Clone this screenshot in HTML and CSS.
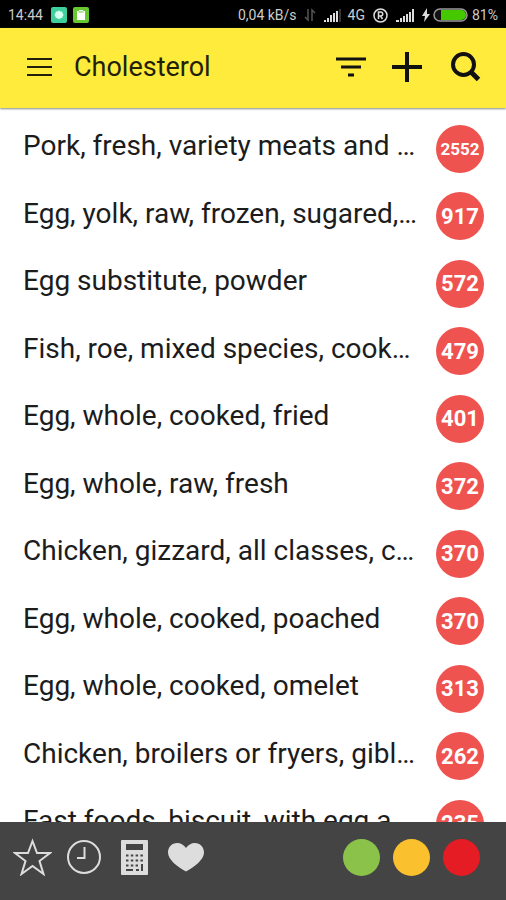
FILE: index.html
```html
<!DOCTYPE html>
<html lang="en">
<head>
<meta charset="utf-8">
<meta name="viewport" content="width=device-width, initial-scale=1">
<title>Cholesterol</title>
<link rel="stylesheet" href="styles.css">
</head>
<body>
<div class="status">
  <span class="clock">14:44</span>
  <svg class="app" width="16" height="16" viewBox="0 0 16 16"><rect width="16" height="16" rx="2" fill="#3fcf9c"/><path d="M8 3.500l1.400 1 1.700.1.500 1.700 1 1.600-1 1.500-.5 1.700-1.700.2-1.400 1-1.400-1-1.700-.2-.5-1.700-1-1.500 1-1.600.5-1.700 1.700-.1z" fill="#d5fff0"/></svg>
  <svg class="app" width="16" height="16" viewBox="0 0 16 16"><rect width="16" height="16" rx="2" fill="#68c832"/><path d="M4 4h2V3h4v1h2v9H4z" fill="#fff"/><path d="M5.500 5h5" stroke="#68c832"/></svg>
  <span class="speed">0,04 kB/s</span>
  <svg class="data" width="12" height="14" viewBox="0 0 12 14" fill="none" stroke="#555" stroke-width="1.500"><path d="M4 1v11L1 9M8 13V2l3 3"/></svg>
  <svg class="signal-a" width="17" height="13" viewBox="0 0 17 13"><path d="M0 13v-2h2v2zM3 13V9h2v4zM6 13V6h2v7zM9 13V4h2v9zM12 13V2h2v11z" fill="#ddd"/><path d="M15 13V0h2v13z" fill="#333"/></svg>
  <span class="net">4G</span>
  <svg class="roaming" width="15" height="15" viewBox="0 0 15 15" fill="none" stroke="#ddd" stroke-width="1.500"><circle cx="7.500" cy="7.500" r="6.500"/><path d="M5.500 11V4h2.200a1.800 1.800 0 0 1 0 4H5.500M7.500 8l2 3"/></svg>
  <svg class="signal-b" width="19" height="13" viewBox="0 0 19 13"><path d="M0 13v-2h3v2zM4 13V9h2v4zM7 13V7h2v6zM10 13V5h2v8zM13 13V3h2v10zM16 13V0h2v13z" fill="#ddd"/></svg>
  <svg class="bolt" width="8" height="14" viewBox="0 0 8 14"><path d="M5 0L0 8h3l-1 6 6-8H5z" fill="#ddd"/></svg>
  <svg class="battery" width="35" height="14" viewBox="0 0 35 14"><rect x="1" y="1" width="33" height="12" rx="6" fill="#111" stroke="#999" stroke-width="1.500"/><path d="M8 2h20a5 5 0 0 1 0 10H8z" fill="#46c800"/></svg>
  <span class="percent">81%</span>
</div>
<header class="bar">
  <button class="icon" aria-label="Menu"><svg width="26" height="20" viewBox="0 0 26 20"><path d="M0 2h25M0 10h25M0 18h25" stroke="#221f08" stroke-width="2"/></svg></button>
  <h1>Cholesterol</h1>
  <button class="icon filter" aria-label="Filter"><svg width="30" height="20" viewBox="0 0 30 20"><path d="M0 2h30M5 10h20M12 18h6" stroke="#111" stroke-width="3"/></svg></button>
  <button class="icon add" aria-label="Add"><svg width="30" height="30" viewBox="0 0 30 30"><path d="M15 0v30M0 15h30" stroke="#111" stroke-width="4"/></svg></button>
  <button class="icon" aria-label="Search"><svg width="30" height="30" viewBox="0 0 30 30" fill="none" stroke="#111"><circle cx="12.500" cy="12.500" r="10.500" stroke-width="4"/><path d="M19 19l8.500 8.500" stroke-width="5"/></svg></button>
</header>
<main class="content">
  <ul class="foods">
    <li><span class="name">Pork, fresh, variety meats and …</span><span class="badge long">2552</span></li>
    <li><span class="name">Egg, yolk, raw, frozen, sugared,…</span><span class="badge">917</span></li>
    <li><span class="name">Egg substitute, powder</span><span class="badge">572</span></li>
    <li><span class="name">Fish, roe, mixed species, cook…</span><span class="badge">479</span></li>
    <li><span class="name">Egg, whole, cooked, fried</span><span class="badge">401</span></li>
    <li><span class="name">Egg, whole, raw, fresh</span><span class="badge">372</span></li>
    <li><span class="name">Chicken, gizzard, all classes, c…</span><span class="badge">370</span></li>
    <li><span class="name">Egg, whole, cooked, poached</span><span class="badge">370</span></li>
    <li><span class="name">Egg, whole, cooked, omelet</span><span class="badge">313</span></li>
    <li><span class="name">Chicken, broilers or fryers, gibl…</span><span class="badge">262</span></li>
    <li><span class="name">Fast foods, biscuit, with egg a…</span><span class="badge">235</span></li>
  </ul>
</main>
<footer class="tools">
  <button class="icon" aria-label="Favourites"><svg width="39" height="38" viewBox="0 0 39 38"><path d="M19.500 3L24 15h13L26.500 23l4 13-11-8-11 8 4-13L2 15h13z" fill="none" stroke="#ddd" stroke-width="2"/></svg></button>
  <button class="icon" aria-label="History"><svg width="34" height="34" viewBox="0 0 34 34" fill="none" stroke="#ddd" stroke-width="2"><circle cx="17" cy="17" r="16"/><path d="M17.500 7v11H10"/></svg></button>
  <button class="icon calc" aria-label="Calculator"><svg width="27" height="35" viewBox="0 0 27 35"><rect width="27" height="35" rx="1" fill="#ddd"/><path d="M5 4h17v6H5z" fill="#444"/><path d="M5 15.500h17M5 20.500h17M5 25.500h12" stroke="#444" stroke-width="2" stroke-dasharray="2.500 2.300"/><path d="M5 30h7M15 30h3M21 24v7" stroke="#444" stroke-width="2"/></svg></button>
  <button class="icon" aria-label="Health"><svg width="36" height="29" viewBox="0 0 36 29"><path d="M18 28.500C10 24 0 17 0 9.500 0 4 4 0 9 0c4 0 7 2 9 5 2-3 5-5 9-5 5 0 9 4 9 9.500C36 17 26 24 18 28.500z" fill="#ddd"/></svg></button>
  <div class="levels">
    <button class="level low" aria-label="Low"></button>
    <button class="level medium" aria-label="Medium"></button>
    <button class="level high" aria-label="High"></button>
  </div>
</footer>
</body>
</html>
```
FILE: styles.css
```css
* { box-sizing: border-box; }
body {
  margin: 0;
  height: 100vh;
  display: flex;
  flex-direction: column;
  background: #fff;
  color: #1c1c1c;
  font-family: Roboto, "Liberation Sans", sans-serif;
}
svg { display: block; flex: none; }
button { border: 0; padding: 0; background: none; }
.icon { flex: none; }
.status {
  flex: none;
  height: 28px;
  display: flex;
  align-items: center;
  padding: 2px 8px 0;
  background: #000;
  color: #ccc;
  font-size: 14px;
  white-space: nowrap;
}
.clock { margin-right: 8px; }
.app { margin-right: 6px; }
.speed { margin-left: auto; }
.data { margin-left: 7px; }
.signal-a { margin-left: 8px; }
.net { margin-left: 7px; }
.roaming { margin-left: 8px; }
.signal-b { margin-left: 8px; }
.bolt { margin-left: 7px; }
.battery { margin-left: 3px; }
.percent { margin-left: 4px; }
.bar {
  flex: none;
  height: 80px;
  display: flex;
  align-items: center;
  padding: 0 25px 2px 27px;
  background: #ffeb3b;
  box-shadow: 0 1px 2px #888;
  z-index: 1;
}
h1 {
  flex: 1;
  margin: 0 0 0 21px;
  color: #221f08;
  font-size: 27px;
  font-weight: 400;
}
.filter { margin-right: 26px; }
.add { margin-right: 29px; }
.content { flex: 1; min-height: 0; overflow: hidden; }
.foods { list-style: none; margin: 0; padding: 7px 22px 0 23px; }
.foods li {
  height: 67px;
  display: flex;
  align-items: center;
  justify-content: space-between;
}
.foods li:nth-child(even) { height: 68px; }
.name { padding-bottom: 6px; font-size: 28px; white-space: nowrap; }
.badge {
  flex: none;
  width: 48px;
  height: 48px;
  display: flex;
  align-items: center;
  justify-content: center;
  border-radius: 50%;
  background: #ef5350;
  color: #fff;
  font-size: 22px;
  font-weight: 700;
}
.badge.long { font-size: 17px; }
.tools {
  flex: none;
  height: 78px;
  display: flex;
  align-items: center;
  gap: 15px;
  padding: 0 26px 8px 13px;
  background: #444;
}
.calc { margin: 0 5px; }
.levels { display: flex; gap: 13px; margin-left: auto; }
.level { width: 37px; height: 37px; border-radius: 50%; }
.low { background: #8bc34a; }
.medium { background: #fbc02d; }
.high { background: #e51c23; }
```
